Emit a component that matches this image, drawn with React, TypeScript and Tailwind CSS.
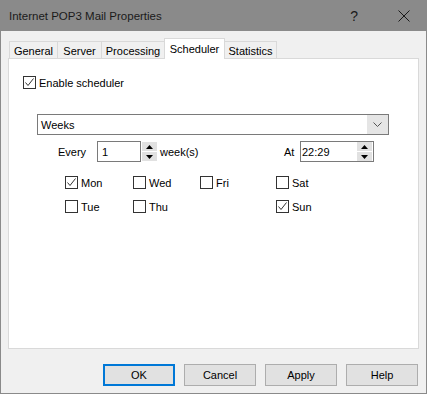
import { useState } from 'react';

const font = { fontFamily: '"Liberation Sans", Arial, sans-serif' };

function Check({ checked }: { checked: boolean }) {
  return (
    <span className="flex h-[13px] w-[13px] shrink-0 items-center justify-center border border-[#333] bg-white">
      {checked && (
        <svg width="11" height="11" viewBox="0 0 11 11">
          <polyline points="1.5,5.5 4,8.5 9.5,1.5" fill="none" stroke="#333" strokeWidth="1" />
        </svg>
      )}
    </span>
  );
}

function CheckBox({ label, checked, onToggle, className = '' }: { label: string; checked: boolean; onToggle: () => void; className?: string }) {
  return (
    <label className={`flex h-[13px] cursor-default items-center gap-[3px] ${className}`} onClick={onToggle}>
      <Check checked={checked} />
      <span>{label}</span>
    </label>
  );
}

function SpinButtons() {
  return (
    <div className="flex w-[15px] flex-col gap-px">
      <div className="flex h-[9px] items-center justify-center bg-[#e1e1e1]">
        <svg width="7" height="4" viewBox="0 0 7 4"><polygon points="3.5,0 7,4 0,4" fill="#000" /></svg>
      </div>
      <div className="flex h-[9px] items-center justify-center bg-[#e1e1e1]">
        <svg width="7" height="4" viewBox="0 0 7 4"><polygon points="0,0 7,0 3.5,4" fill="#000" /></svg>
      </div>
    </div>
  );
}

const tabs = ['General', 'Server', 'Processing', 'Scheduler', 'Statistics'];
const tabWidths: Record<string, string> = {
  General: 'w-[49px]',
  Server: 'w-[45px]',
  Processing: 'w-[64px]',
  Scheduler: 'w-[61px]',
  Statistics: 'w-[53px]',
};

export default function App() {
  const [enabled, setEnabled] = useState(true);
  const [days, setDays] = useState<Record<string, boolean>>({ Mon: true, Sun: true });
  const toggle = (d: string) => setDays((p) => ({ ...p, [d]: !p[d] }));

  return (
    <div className="flex h-[394px] w-[427px] flex-col border-x border-b border-[#8a8a8a] bg-[#f0f0f0] text-[11px] leading-[14px] text-black" style={font}>
      <div className="flex h-[31px] shrink-0 items-center bg-[#8a8a8a] pl-[8px] text-[11.5px] text-[#1a1a1a]">
        <span className="flex-1">Internet POP3 Mail Properties</span>
        <span className="mr-[40px] text-[14px]">?</span>
        <svg width="12" height="12" viewBox="0 0 12 12" className="mr-[16px]">
          <path d="M0.5 0.5 L11.5 11.5 M11.5 0.5 L0.5 11.5" stroke="#1a1a1a" strokeWidth="1" />
        </svg>
      </div>

      <div className="flex flex-1 flex-col px-[7px]">
        <div className="mt-[7px] flex h-[20px] items-end pl-px">
          {tabs.map((t) =>
            t === 'Scheduler' ? (
              <div key={t} className={`relative z-10 -mb-px -ml-px flex h-[21px] items-start justify-center border border-b-0 border-[#d9d9d9] bg-white pt-[3px] ${tabWidths[t]}`}>
                {t}
              </div>
            ) : (
              <div key={t} className={`-ml-px flex h-[17px] items-center justify-center border border-b-0 border-[#d9d9d9] bg-[#f0f0f0] pt-[2px] first:ml-0 ${tabWidths[t]}`}>
                {t}
              </div>
            )
          )}
        </div>

        <div className="flex h-[291px] flex-col border border-[#d9d9d9] bg-white">
          <CheckBox label="Enable scheduler" checked={enabled} onToggle={() => setEnabled(!enabled)} className="ml-[14px] mt-[17px]" />

          <div className="ml-[28px] mt-[25px] flex h-[21px] w-[352px] items-center border border-[#7a7a7a] bg-white">
            <span className="flex-1 pl-[3px]">Weeks</span>
            <div className="flex h-full w-[21px] items-center justify-center bg-[#e5e5e5]">
              <svg width="9" height="5" viewBox="0 0 9 5"><polyline points="0.5,0.5 4.5,4.5 8.5,0.5" fill="none" stroke="#555" strokeWidth="1" /></svg>
            </div>
          </div>

          <div className="mt-[6px] flex h-[21px] items-center">
            <span className="ml-[49px] w-[39px]">Every</span>
            <div className="flex h-[21px] w-[44px] items-center border border-[#7a7a7a] pl-[4px]">1</div>
            <div className="flex h-[21px] items-center pl-px">
              <SpinButtons />
            </div>
            <span className="ml-[3px] w-[124px]">week(s)</span>
            <span className="w-[16px]">At</span>
            <div className="flex h-[21px] w-[74px] items-center border border-[#7a7a7a] pl-[1px]">
              <span className="flex-1">22:29</span>
              <div className="pr-px">
                <SpinButtons />
              </div>
            </div>
          </div>

          <div className="mt-[14px] flex items-center">
            <CheckBox label="Mon" checked={!!days.Mon} onToggle={() => toggle('Mon')} className="ml-[56px] w-[68px]" />
            <CheckBox label="Wed" checked={!!days.Wed} onToggle={() => toggle('Wed')} className="w-[67px]" />
            <CheckBox label="Fri" checked={!!days.Fri} onToggle={() => toggle('Fri')} className="w-[76px]" />
            <CheckBox label="Sat" checked={!!days.Sat} onToggle={() => toggle('Sat')} />
          </div>
          <div className="mt-[11px] flex items-center">
            <CheckBox label="Tue" checked={!!days.Tue} onToggle={() => toggle('Tue')} className="ml-[56px] w-[68px]" />
            <CheckBox label="Thu" checked={!!days.Thu} onToggle={() => toggle('Thu')} className="w-[143px]" />
            <CheckBox label="Sun" checked={!!days.Sun} onToggle={() => toggle('Sun')} />
          </div>
        </div>

        <div className="mt-[15px] flex justify-end gap-[9px] pr-px">
          <button className="h-[22px] w-[72px] border-2 border-[#0078d7] bg-[#e1e1e1]">OK</button>
          <button className="h-[22px] w-[72px] border border-[#adadad] bg-[#e1e1e1]">Cancel</button>
          <button className="h-[22px] w-[72px] border border-[#adadad] bg-[#e1e1e1]">Apply</button>
          <button className="h-[22px] w-[72px] border border-[#adadad] bg-[#e1e1e1]">Help</button>
        </div>
      </div>
    </div>
  );
}
